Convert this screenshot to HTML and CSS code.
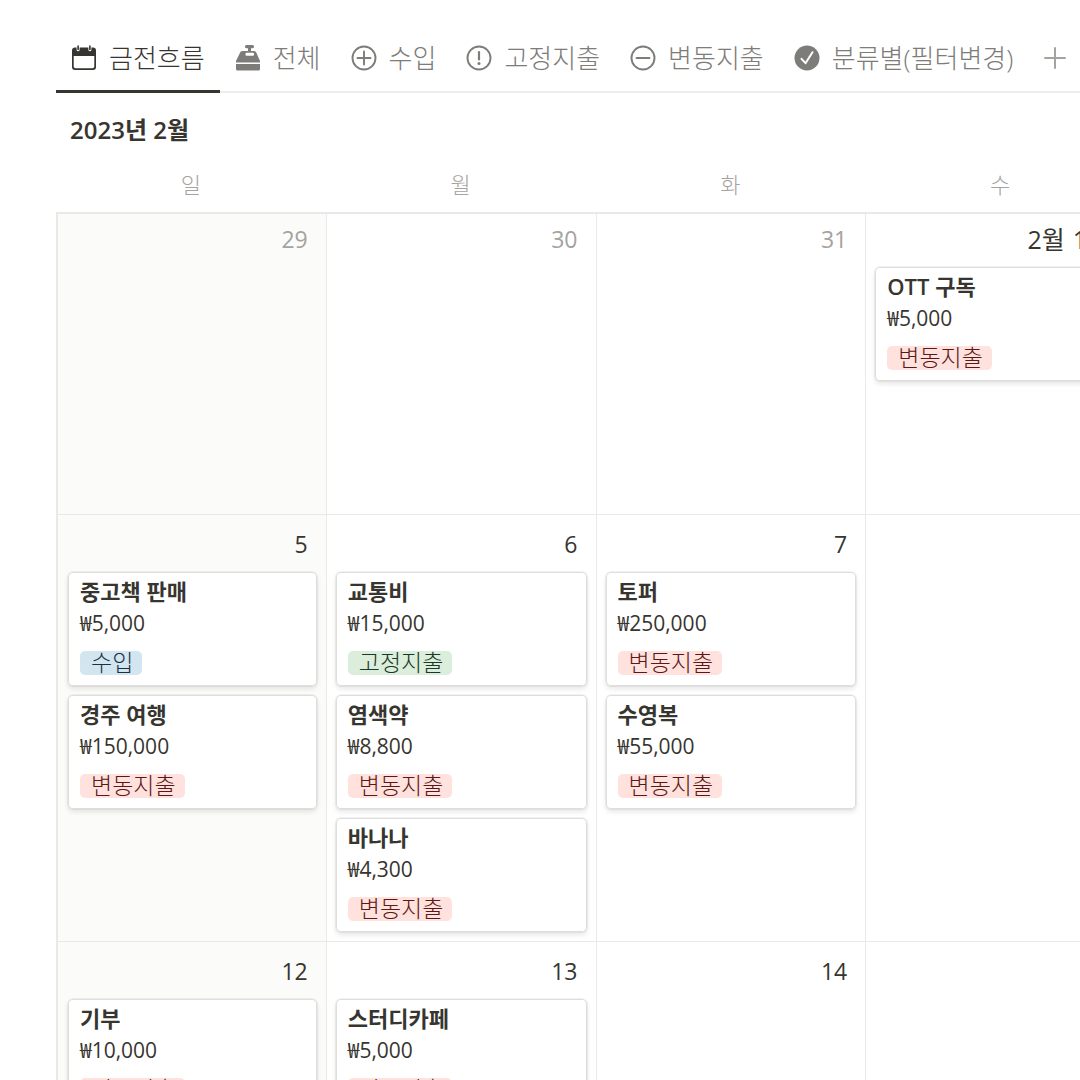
FILE: index.html
```html
<!DOCTYPE html>
<html lang="ko">
<head>
    <meta charset="UTF-8">
    <meta name="viewport" content="width=device-width, initial-scale=1.0">
    <title>금전흐름</title>
    <link rel="stylesheet" href="styles.css">
</head>
<body>
    <nav class="tabs">
        <button class="tab active">
            <svg class="icon" viewBox="0 0 26 26"><path fill="currentColor" fill-rule="evenodd" d="M4 2.500h1.600v2.200a1.500 1.500 0 0 0 3 0V2.500h8.800v2.200a1.500 1.500 0 0 0 3 0V2.500H22a3 3 0 0 1 3 3V22a3 3 0 0 1-3 3H4a3 3 0 0 1-3-3V5.500a3 3 0 0 1 3-3zM2.700 11v10.500A1.800 1.800 0 0 0 4.500 23.300h17a1.800 1.800 0 0 0 1.800-1.800V11z"/><path stroke="currentColor" stroke-width="1.600" stroke-linecap="round" d="M7.100 1v3.500M18.900 1v3.500"/></svg>
            금전흐름
        </button>
        <button class="tab">
            <svg class="icon" viewBox="0 0 26 26"><path fill="currentColor" fill-rule="evenodd" d="M11.500 0h6a1.200 1.200 0 0 1 0 3.200h-1.500V6H19a2.500 2.500 0 0 1 2.400 1.800L25 16v1.500H1V16L5 7.800A2.500 2.500 0 0 1 7.300 6H13V3.200h-1.500a1.200 1.200 0 0 1 0-3.200zM11.500 7.800a1 1 0 0 0-1 1v1a1 1 0 0 0 1 1h6.500a1 1 0 0 0 1-1v-1a1 1 0 0 0-1-1z"/><path fill="currentColor" d="M1 19h24v5a1.500 1.500 0 0 1-1.500 1.500h-21A1.500 1.500 0 0 1 1 24z"/></svg>
            전체
        </button>
        <button class="tab">
            <svg class="icon" viewBox="0 0 26 26"><g fill="none" stroke="currentColor" stroke-width="1.900" stroke-linecap="round"><circle cx="13" cy="13" r="11.500"/><path d="M13 6.500v13M6.500 13h13"/></g></svg>
            수입
        </button>
        <button class="tab">
            <svg class="icon" viewBox="0 0 26 26"><circle cx="13" cy="13" r="11.500" fill="none" stroke="currentColor" stroke-width="1.900"/><path stroke="currentColor" stroke-width="2.200" stroke-linecap="round" d="M13 7v7.500"/><circle cx="13" cy="18.600" r="1.500" fill="currentColor"/></svg>
            고정지출
        </button>
        <button class="tab">
            <svg class="icon" viewBox="0 0 26 26"><g fill="none" stroke="currentColor" stroke-width="1.900" stroke-linecap="round"><circle cx="13" cy="13" r="11.500"/><path d="M6.500 13h13"/></g></svg>
            변동지출
        </button>
        <button class="tab">
            <svg class="icon" viewBox="0 0 26 26"><circle cx="13" cy="13" r="12.500" fill="currentColor"/><path fill="none" stroke="#fff" stroke-width="2" stroke-linecap="round" stroke-linejoin="round" d="M7.500 13.800l4 4.400 7-11"/></svg>
            분류별(필터변경)
        </button>
        <button class="add-tab" aria-label="보기 추가">
            <svg class="icon" viewBox="0 0 26 26"><path stroke="currentColor" stroke-width="2" stroke-linecap="round" d="M13 3v20M3 13h20"/></svg>
        </button>
    </nav>

    <h1 class="month">2023년 2월</h1>

    <table class="calendar">
        <thead>
            <tr>
                <th>일</th>
                <th>월</th>
                <th>화</th>
                <th>수</th>
            </tr>
        </thead>
        <tbody>
            <tr class="first-week">
                <td class="weekend"><div class="date other">29</div></td>
                <td><div class="date other">30</div></td>
                <td><div class="date other">31</div></td>
                <td>
                    <div class="date month-start"><span>2월</span><span>1일</span></div>
                    <div class="cards">
                        <a class="card" href="#">
                            <div class="title">OTT 구독</div>
                            <div class="price">₩5,000</div>
                            <span class="tag red">변동지출</span>
                        </a>
                    </div>
                </td>
            </tr>
            <tr>
                <td class="weekend">
                    <div class="date">5</div>
                    <div class="cards">
                        <a class="card" href="#">
                            <div class="title">중고책 판매</div>
                            <div class="price">₩5,000</div>
                            <span class="tag blue">수입</span>
                        </a>
                        <a class="card" href="#">
                            <div class="title">경주 여행</div>
                            <div class="price">₩150,000</div>
                            <span class="tag red">변동지출</span>
                        </a>
                    </div>
                </td>
                <td>
                    <div class="date">6</div>
                    <div class="cards">
                        <a class="card" href="#">
                            <div class="title">교통비</div>
                            <div class="price">₩15,000</div>
                            <span class="tag green">고정지출</span>
                        </a>
                        <a class="card" href="#">
                            <div class="title">염색약</div>
                            <div class="price">₩8,800</div>
                            <span class="tag red">변동지출</span>
                        </a>
                        <a class="card" href="#">
                            <div class="title">바나나</div>
                            <div class="price">₩4,300</div>
                            <span class="tag red">변동지출</span>
                        </a>
                    </div>
                </td>
                <td>
                    <div class="date">7</div>
                    <div class="cards">
                        <a class="card" href="#">
                            <div class="title">토퍼</div>
                            <div class="price">₩250,000</div>
                            <span class="tag red">변동지출</span>
                        </a>
                        <a class="card" href="#">
                            <div class="title">수영복</div>
                            <div class="price">₩55,000</div>
                            <span class="tag red">변동지출</span>
                        </a>
                    </div>
                </td>
                <td></td>
            </tr>
            <tr>
                <td class="weekend">
                    <div class="date">12</div>
                    <div class="cards">
                        <a class="card" href="#">
                            <div class="title">기부</div>
                            <div class="price">₩10,000</div>
                            <span class="tag red">변동지출</span>
                        </a>
                    </div>
                </td>
                <td>
                    <div class="date">13</div>
                    <div class="cards">
                        <a class="card" href="#">
                            <div class="title">스터디카페</div>
                            <div class="price">₩5,000</div>
                            <span class="tag red">변동지출</span>
                        </a>
                    </div>
                </td>
                <td><div class="date">14</div></td>
                <td></td>
            </tr>
        </tbody>
    </table>
</body>
</html>
```
FILE: styles.css
```css
* {
    box-sizing: border-box;
}
html {
    height: 100%;
    overflow: hidden;
}
body {
    height: 100%;
    margin: 0;
    padding: 28px 0 0 56px;
    overflow: hidden;
    background: #fff;
    color: #37352f;
    font-family: 'Open Sans', 'Noto Sans CJK KR', sans-serif;
    font-weight: 300;
}
.tabs {
    display: flex;
    box-shadow: inset 0 -2px #ededec;
}
.tab,
.add-tab {
    display: flex;
    flex-shrink: 0;
    align-items: center;
    gap: 12px;
    padding: 0 15px 2px;
    border: none;
    border-bottom: 3px solid transparent;
    background: none;
    color: #7d7c78;
    font: inherit;
    font-size: 26px;
    line-height: 60px;
    white-space: nowrap;
    cursor: pointer;
}
.tab.active {
    color: #37352f;
    border-bottom-color: #37352f;
}
.add-tab {
    padding: 0 14px 2px;
    color: #a4a3a0;
}
.icon {
    display: block;
    width: 26px;
    height: 26px;
}
.month {
    margin: 0;
    padding: 0 0 2px 14px;
    font-size: 24px;
    font-weight: 600;
    line-height: 74px;
}
/* the last column runs past the right edge of the window */
.calendar {
    width: calc(100% + 55px);
    table-layout: fixed;
    border-collapse: separate;
    border-spacing: 0;
}
.calendar th {
    padding: 0 0 13px;
    color: #a4a3a0;
    font-size: 22px;
    font-weight: 300;
    line-height: 30px;
}
.calendar td {
    height: 427px;
    padding: 0 9px 9px;
    vertical-align: top;
    border-top: 1px solid #e9e9e7;
    border-left: 1px solid #e9e9e7;
}
.calendar td:first-child {
    padding-left: 10px;
    border-left-width: 2px;
}
.calendar .first-week td {
    height: 302px;
    border-top-width: 2px;
}
.calendar .weekend {
    background: #fbfbfa;
}
.date {
    display: flex;
    justify-content: flex-end;
    gap: 8px;
    padding: 2px 9px 0 0;
    font-size: 23px;
    font-weight: 400;
    line-height: 55px;
}
.first-week .date {
    padding: 0 9px 2px 0;
    line-height: 51px;
}
.date.other {
    color: #a4a3a0;
}
.first-week .month-start {
    padding-right: 16px;
    font-size: 25px;
}
.cards {
    display: flex;
    flex-direction: column;
    gap: 9px;
}
.card {
    display: block;
    height: 114px;
    padding: 3px 12px 11px;
    border-radius: 5px;
    background: #fff;
    box-shadow: inset 0 0 0 1px #dededd, 0 0 0 1px rgba(15, 15, 15, 0.05), 0 3px 5px rgba(15, 15, 15, 0.1);
    color: inherit;
    text-decoration: none;
}
.title {
    font-size: 22px;
    font-weight: 600;
    line-height: 32px;
}
.price {
    font-size: 21px;
    font-weight: 400;
    line-height: 33px;
}
.tag {
    display: block;
    width: fit-content;
    margin-top: 11px;
    padding: 0 9px 2px 11px;
    border-radius: 5px;
    font-size: 23px;
    line-height: 22px;
}
.red {
    background: #ffe2dd;
    color: #5d1715;
}
.blue {
    background: #d3e5ef;
    color: #183347;
}
.green {
    background: #dbeddb;
    color: #1c3829;
}
```
